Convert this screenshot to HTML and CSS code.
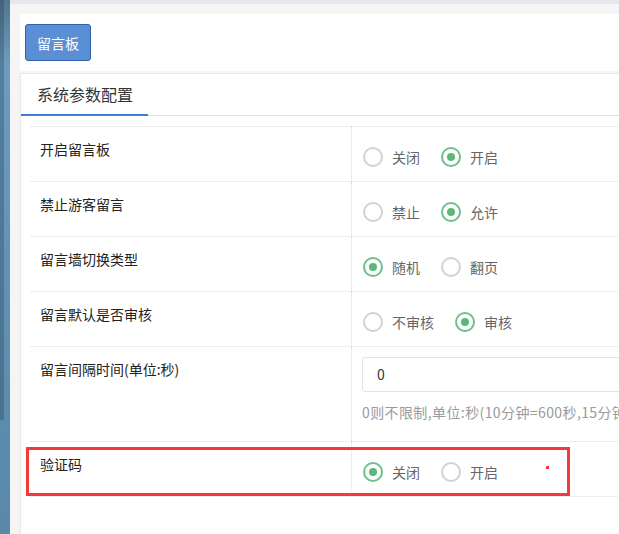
FILE: index.html
```html
<!DOCTYPE html>
<html lang="zh-CN">
<head>
<meta charset="utf-8">
<title>留言板</title>
<link rel="stylesheet" href="styles.css">
</head>
<body>
<div class="app">
  <aside class="strip"><div class="strip-band"></div></aside>
  <main class="main">
    <div class="topbar"></div>
    <div class="content">
      <section class="panel toolbar">
        <button class="btn" type="button">留言板</button>
      </section>
      <section class="panel card">
        <div class="tabs">
          <div class="tab active">系统参数配置</div>
        </div>
        <div class="form">
          <div class="row">
            <div class="label">开启留言板</div>
            <div class="field">
              <label class="radio"><span class="dot"></span>关闭</label>
              <label class="radio"><span class="dot on"></span>开启</label>
            </div>
          </div>
          <div class="row">
            <div class="label">禁止游客留言</div>
            <div class="field">
              <label class="radio"><span class="dot"></span>禁止</label>
              <label class="radio"><span class="dot on"></span>允许</label>
            </div>
          </div>
          <div class="row">
            <div class="label">留言墙切换类型</div>
            <div class="field">
              <label class="radio"><span class="dot on"></span>随机</label>
              <label class="radio"><span class="dot"></span>翻页</label>
            </div>
          </div>
          <div class="row">
            <div class="label">留言默认是否审核</div>
            <div class="field">
              <label class="radio"><span class="dot"></span>不审核</label>
              <label class="radio"><span class="dot on"></span>审核</label>
            </div>
          </div>
          <div class="row">
            <div class="label">留言间隔时间(单位:秒)</div>
            <div class="field field-input">
              <div class="input">0</div>
              <div class="help">0则不限制,单位:秒(10分钟=600秒,15分钟=900秒)</div>
            </div>
          </div>
          <div class="row last">
            <div class="label">验证码</div>
            <div class="field">
              <label class="radio"><span class="dot on"></span>关闭</label>
              <label class="radio"><span class="dot"></span>开启</label>
            </div>
          </div>
        </div>
      </section>
    </div>
  </main>
</div>
<div class="highlight"></div>
<div class="marker"></div>
</body>
</html>
```

FILE: styles.css
```css
html, body {
  margin: 0;
  padding: 0;
}
body {
  width: 619px;
  height: 534px;
  overflow: hidden;
  position: relative;
  font-family: "Noto Sans CJK SC", "Liberation Sans", sans-serif;
  font-size: 14px;
  color: #333;
  background: #f5f5f5;
}
.app {
  display: flex;
  height: 534px;
}
.strip {
  flex: none;
  width: 10px;
  background: linear-gradient(to bottom, #52768f 0, #6a9dbf 12%, #6294b6 45%, #5b8cad 80%, #5a89aa 100%);
}
.strip-band {
  width: 4px;
  height: 420px;
  background: rgba(30, 50, 70, 0.28);
}
.main {
  flex: 1;
  overflow: hidden;
  background: #f5f5f5;
}
.topbar {
  height: 4px;
  background: #e4e7ec;
}
.content {
  width: 900px;
  padding: 10px 0 0 10px;
  display: flex;
  flex-direction: column;
  gap: 2px;
}
.panel {
  background: #fff;
}
.toolbar {
  height: 57px;
  box-sizing: border-box;
  padding: 10px 5px;
}
.btn {
  height: 37px;
  padding: 0 11px;
  border: 1px solid #2f62ab;
  border-radius: 3px;
  background: #5a8fd6;
  color: #fff;
  font-family: inherit;
  font-size: 14px;
  line-height: 20px;
}
.card {
  border-top: 1px solid #e8e8e8;
  border-left: 1px solid #e8e8e8;
  min-height: 470px;
}
.tabs {
  display: flex;
  height: 41px;
  border-bottom: 1px solid #e0e0e0;
}
.tab {
  height: 42px;
  box-sizing: border-box;
  padding: 0 15px 0 16px;
  font-size: 16px;
  line-height: 40px;
  color: #333;
}
.tab.active {
  border-bottom: 2px solid #3b7dd8;
}
.form {
  padding: 10px 0 0 10px;
}
.row {
  display: grid;
  grid-template-columns: 320px 1fr;
  border-top: 1px dotted #dcdcdc;
}
.row.last {
  border-bottom: 1px dotted #dcdcdc;
}
.label {
  padding: 12px 9px;
  line-height: 20px;
  color: #222;
}
.field {
  display: flex;
  align-items: center;
  padding: 20px 0 14px 11px;
  border-left: 1px dotted #dcdcdc;
  color: #666;
}
.field-input {
  display: block;
  padding: 10px 0 19px 10px;
}
.radio {
  display: inline-flex;
  align-items: center;
  gap: 9px;
  margin-right: 21px;
  line-height: 20px;
}
.dot {
  width: 20px;
  height: 20px;
  box-sizing: border-box;
  border: 2px solid #cfd2d8;
  border-radius: 50%;
  display: flex;
  align-items: center;
  justify-content: center;
}
.dot.on {
  border-color: #6cc08a;
}
.dot.on::after {
  content: "";
  width: 8px;
  height: 8px;
  border-radius: 50%;
  background: #5cb878;
}
.input {
  width: 500px;
  height: 35px;
  box-sizing: border-box;
  border: 1px solid #e2e2e2;
  border-radius: 3px;
  padding: 0 14px;
  line-height: 33px;
  color: #333;
}
.help {
  margin-top: 10px;
  line-height: 20px;
  color: #9a9a9a;
  white-space: nowrap;
  letter-spacing: 0.4px;
}
.highlight {
  position: absolute;
  left: 26px;
  top: 447px;
  width: 544px;
  height: 49px;
  box-sizing: border-box;
  border: 3px solid #f53838;
}
.marker {
  position: absolute;
  left: 546px;
  top: 466px;
  width: 3px;
  height: 3px;
  background: #f53838;
}
```
